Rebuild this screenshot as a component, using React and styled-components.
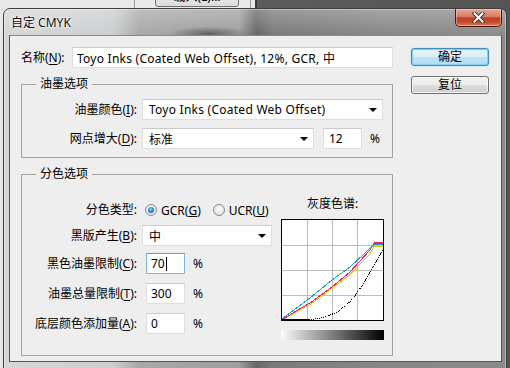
import React from "react";
import styled, { createGlobalStyle } from "styled-components";

const GlobalStyle = createGlobalStyle`
  html, body {
    margin: 0;
    padding: 0;
  }
  body {
    background: #5a5a5a;
    font-family: "Noto Sans", "Noto Sans CJK SC", sans-serif;
    font-size: 12px;
    color: #000;
  }
`;

const Desktop = styled.div`
  position: relative;
  width: 510px;
  height: 368px;
  overflow: hidden;
  box-sizing: border-box;
  padding: 8px 0 0 3px;
  background: linear-gradient(
    to right,
    #e9e9e9 0,
    #e9e9e9 255px,
    #3c3c3c 255px,
    #3c3c3c 257px,
    #5c5c5c 257px,
    #555 100%
  );
`;

// the window behind the dialog, only its lower edge shows
const BackWindow = styled.div`
  position: absolute;
  top: 0;
  left: 0;
  width: 255px;
  height: 8px;
  display: flex;
  align-items: flex-end;
`;

const BackDivider = styled.div`
  flex: none;
  width: 1px;
  height: 8px;
  margin-left: ${(p) => p.$ml}px;
  background: #9a9a9a;
`;

const BackButton = styled.div`
  flex: none;
  width: 84px;
  height: 20px;
  margin-left: 20px;
  margin-bottom: 1px;
  box-sizing: border-box;
  border: 1px solid #707070;
  border-radius: 3px;
  background: linear-gradient(#f2f2f2, #dcdcdc);
  font-size: 12px;
  line-height: 18px;
  text-align: center;
`;

const Dialog = styled.div`
  width: 504px;
  height: 372px;
  box-sizing: border-box;
  border: 1px solid #3e3e3e;
  border-radius: 7px 7px 0 0;
  display: flex;
  flex-direction: column;
  background:
    linear-gradient(rgba(255, 255, 255, 0.25), rgba(255, 255, 255, 0) 26px),
    radial-gradient(ellipse 40px 8px at 205px 25px, rgba(40, 40, 40, 0.55), rgba(40, 40, 40, 0)),
    linear-gradient(
      to right,
      #d4d6d8 0,
      #cbcdcf 110px,
      #a8a8a8 135px,
      #9f9f9f 235px,
      #676767 252px,
      #7a7a7a 268px,
      #878787 380px,
      #8b8b8b 100%
    );
  box-shadow: inset 0 0 0 1px rgba(255, 255, 255, 0.35);
`;

const TitleBar = styled.div`
  flex: none;
  height: 26px;
  display: flex;
  align-items: center;
  justify-content: space-between;
  padding: 0 4px 0 7px;
`;

const Title = styled.span`
  font-size: 12px;
  color: #111;
  text-shadow: 0 0 5px #fff, 0 0 2px #fff;
`;

const CloseButton = styled.div`
  align-self: flex-start;
  width: 47px;
  height: 18px;
  box-sizing: border-box;
  border: 1px solid #4e1a10;
  border-top: none;
  border-radius: 0 0 5px 5px;
  background: linear-gradient(#e8a797 0%, #d77b66 45%, #c1401f 52%, #c5472a 75%, #dc7c5c 100%);
  box-shadow: inset 0 0 0 1px rgba(255, 220, 210, 0.45);
  display: flex;
  align-items: center;
  justify-content: center;
`;

const Client = styled.div`
  flex: none;
  height: 327px;
  box-sizing: border-box;
  margin: 0 4px 0 5px;
  border: 1px solid #555;
  border-top-color: #8a8a8a;
  background: #eeeeee;
  display: flex;
  padding: 11px 12px 0 11px;
`;

const MainColumn = styled.div`
  flex: none;
  width: 372px;
  display: flex;
  flex-direction: column;
`;

const ButtonColumn = styled.div`
  flex: none;
  margin: 1px 0 0 18px;
  display: flex;
  flex-direction: column;
  gap: 10px;
`;

const PushButton = styled.div`
  width: 78px;
  height: 18px;
  box-sizing: border-box;
  border: 1px solid ${(p) => (p.$default ? "#3c8ec4" : "#707070")};
  border-radius: 3px;
  background: ${(p) =>
    p.$default
      ? "linear-gradient(#e7f5fc 0%, #d7eefa 50%, #bfe3f6 52%, #b2dcf3 100%)"
      : "linear-gradient(#f3f3f3 0%, #ebebeb 50%, #dddddd 52%, #cfcfcf 100%)"};
  box-shadow: ${(p) =>
    p.$default
      ? "inset 0 0 0 1px #7fd0f7, 0 0 1px #55b8ea"
      : "inset 0 0 0 1px rgba(255,255,255,0.7)"};
  font-size: 12px;
  line-height: 16px;
  text-align: center;
`;

const NameRow = styled.div`
  height: 21px;
  display: flex;
  align-items: center;
`;

const Label = styled.span`
  flex: none;
  width: ${(p) => p.$w}px;
  text-align: ${(p) => p.$align || "left"};
  white-space: nowrap;
  line-height: 16px;

  u {
    text-decoration-thickness: 1px;
    text-underline-offset: 2px;
  }
`;

const Group = styled.fieldset`
  margin: 8px 0 0;
  padding: ${(p) => p.$pad};
  border: 1px solid #a3a3a3;
  min-width: 0;
`;

const Legend = styled.legend`
  margin-left: 14px;
  padding: 0 4px;
  line-height: 16px;
  font-size: 12px;
`;

const FormRow = styled.div`
  height: ${(p) => p.$h || 21}px;
  margin-top: ${(p) => p.$mt || 0}px;
  display: flex;
  align-items: center;
`;

const FieldArea = styled.div`
  margin-left: 5px;
  display: flex;
  align-items: center;
  height: 100%;
`;

const TextBox = styled.div`
  flex: none;
  box-sizing: border-box;
  width: ${(p) => p.$w}px;
  height: 21px;
  margin-left: ${(p) => p.$ml || 0}px;
  padding-left: ${(p) => p.$pl || 4}px;
  letter-spacing: ${(p) => (p.$wide ? "0.25px" : "0")};
  background: #fff;
  border: 1px solid ${(p) => (p.$focused ? "#7eb4ea" : "#dedede")};
  border-top-color: ${(p) => (p.$focused ? "#569de5" : "#cbcbcb")};
  display: flex;
  align-items: center;
  white-space: nowrap;
  overflow: hidden;
`;

const Caret = styled.span`
  display: inline-block;
  width: 1px;
  height: 14px;
  margin-left: 1px;
  background: #000;
`;

const SelectBox = styled(TextBox)`
  position: relative;
  padding-left: 6px;
  justify-content: space-between;
  padding-right: 5px;
`;

const Arrow = styled.span`
  width: 0;
  height: 0;
  border-left: 4px solid transparent;
  border-right: 4px solid transparent;
  border-top: 4px solid #000;
`;

const Unit = styled.span`
  margin-left: ${(p) => p.$ml || 8}px;
`;

const SplitBody = styled.div`
  display: flex;
`;

const SplitFields = styled.div`
  flex: none;
  padding-top: 18px;
  display: flex;
  flex-direction: column;
`;

const Radio = styled.span`
  flex: none;
  width: 12px;
  height: 12px;
  box-sizing: border-box;
  margin-left: ${(p) => p.$ml}px;
  border-radius: 50%;
  border: 1px solid #8a8d90;
  background: radial-gradient(circle at 50% 40%, #fdfdfd 0%, #e6e6e6 60%, #cfd1d3 100%);
  display: flex;
  align-items: center;
  justify-content: center;

  &::after {
    content: "";
    display: ${(p) => (p.$checked ? "block" : "none")};
    width: 6px;
    height: 6px;
    border-radius: 50%;
    background: radial-gradient(circle at 45% 35%, #8fd2f8 0%, #1b7fc4 55%, #0d4e84 100%);
  }
`;

const RadioText = styled.span`
  margin-left: 4px;
`;

const Ramp = styled.div`
  flex: none;
  width: 103px;
  margin-left: auto;
  padding-top: 14px;
  display: flex;
  flex-direction: column;
  align-items: center;
`;

const RampTitle = styled.div`
  line-height: 16px;
  margin-bottom: 7px;
`;

const GrayBar = styled.div`
  width: 103px;
  height: 10px;
  margin-top: 9px;
  background: linear-gradient(to right, #fbfbfb, #000);
`;

function CloseGlyph() {
  return (
    <svg width="13" height="11" viewBox="0 0 13 11">
      <path d="M2.5 1.5 L10.5 9.5 M10.5 1.5 L2.5 9.5" stroke="#3a3a3a" strokeWidth="4" strokeLinecap="square" />
      <path d="M2.5 1.5 L10.5 9.5 M10.5 1.5 L2.5 9.5" stroke="#fff" strokeWidth="2" strokeLinecap="square" />
    </svg>
  );
}

function GrayCurves() {
  return (
    <svg width="103" height="102" viewBox="0 0 103 102" shapeRendering="crispEdges">
      <rect x="0" y="0" width="103" height="102" fill="#fff" />
      <g stroke="#bdbdbd" strokeWidth="1">
        <path d="M26.5 1 V101 M51.5 1 V101 M76.5 1 V101" />
        <path d="M1 26.5 H102 M1 51.5 H102 M1 76.5 H102" />
      </g>
      <g fill="none" strokeWidth="1">
        <polyline
          stroke="#f5c400"
          points="1,101 15,93 29,85.5 51,69.5 69,55.5 89,35 93,27 102,27"
        />
        <polyline
          stroke="#ee1c6b"
          points="1,101 15,92 29,84 51,68 69,53 89,31 93,24 102,24"
        />
        <path d="M93 23.5 H102" stroke="#ee1c6b" strokeWidth="2" />
        <polyline
          stroke="#1f9fd4"
          points="1,100 15,89.5 29,79 51,61 69,48 91,27.5 93,25.5 102,25.5"
        />
        <path d="M1 100.5 H28" stroke="#000" strokeWidth="1.5" />
        <polyline
          stroke="#000"
          strokeDasharray="1 1"
          points="28,100.5 34,100 40,99 48,96.5 56,93 63,88 70,81.5 76,74 82,65 89,53 95,43 102,31"
        />
      </g>
      <rect x="0.5" y="0.5" width="102" height="101" fill="none" stroke="#000" />
    </svg>
  );
}

export default function App() {
  return (
    <>
      <GlobalStyle />
      <Desktop>
        <BackWindow>
          <BackDivider $ml={134} />
          <BackButton>载入(L)...</BackButton>
          <BackDivider $ml={11} />
        </BackWindow>

        <Dialog>
          <TitleBar>
            <Title>自定 CMYK</Title>
            <CloseButton>
              <CloseGlyph />
            </CloseButton>
          </TitleBar>

          <Client>
            <MainColumn>
              <NameRow>
                <Label $w={51}>
                  名称(<u>N</u>):
                </Label>
                <TextBox $w={321} $wide>
                  Toyo Inks (Coated Web Offset), 12%, GCR, 中
                </TextBox>
              </NameRow>

              <Group $pad="7px 0 8px 0">
                <Legend>油墨选项</Legend>
                <FormRow>
                  <Label $w={115} $align="right">
                    油墨颜色(<u>I</u>):
                  </Label>
                  <FieldArea>
                    <SelectBox $w={241} $wide>
                      <span>Toyo Inks (Coated Web Offset)</span>
                      <Arrow />
                    </SelectBox>
                  </FieldArea>
                </FormRow>
                <FormRow $mt={8}>
                  <Label $w={115} $align="right">
                    网点增大(<u>D</u>):
                  </Label>
                  <FieldArea>
                    <SelectBox $w={172}>
                      <span>标准</span>
                      <Arrow />
                    </SelectBox>
                    <TextBox $w={39} $ml={9} $pl={5}>
                      12
                    </TextBox>
                    <Unit>%</Unit>
                  </FieldArea>
                </FormRow>
              </Group>

              <Group $pad="0 8px 15px 0">
                <Legend>分色选项</Legend>
                <SplitBody>
                  <SplitFields>
                    <FormRow $h={20}>
                      <Label $w={115} $align="right">
                        分色类型:
                      </Label>
                      <FieldArea>
                        <Radio $ml={3} $checked />
                        <RadioText>
                          GCR(<u>G</u>)
                        </RadioText>
                        <Radio $ml={12} />
                        <RadioText>
                          UCR(<u>U</u>)
                        </RadioText>
                      </FieldArea>
                    </FormRow>
                    <FormRow $mt={5}>
                      <Label $w={115} $align="right">
                        黑版产生(<u>B</u>):
                      </Label>
                      <FieldArea>
                        <SelectBox $w={130}>
                          <span>中</span>
                          <Arrow />
                        </SelectBox>
                      </FieldArea>
                    </FormRow>
                    <FormRow $mt={7}>
                      <Label $w={115} $align="right">
                        黑色油墨限制(<u>C</u>):
                      </Label>
                      <FieldArea>
                        <TextBox $w={39} $ml={4} $focused>
                          70
                          <Caret />
                        </TextBox>
                        <Unit>%</Unit>
                      </FieldArea>
                    </FormRow>
                    <FormRow $mt={9}>
                      <Label $w={115} $align="right">
                        油墨总量限制(<u>T</u>):
                      </Label>
                      <FieldArea>
                        <TextBox $w={39} $ml={4}>
                          300
                        </TextBox>
                        <Unit>%</Unit>
                      </FieldArea>
                    </FormRow>
                    <FormRow $mt={9}>
                      <Label $w={115} $align="right">
                        底层颜色添加量(<u>A</u>):
                      </Label>
                      <FieldArea>
                        <TextBox $w={39} $ml={4}>
                          0
                        </TextBox>
                        <Unit>%</Unit>
                      </FieldArea>
                    </FormRow>
                  </SplitFields>

                  <Ramp>
                    <RampTitle>灰度色谱:</RampTitle>
                    <GrayCurves />
                    <GrayBar />
                  </Ramp>
                </SplitBody>
              </Group>
            </MainColumn>

            <ButtonColumn>
              <PushButton $default>确定</PushButton>
              <PushButton>复位</PushButton>
            </ButtonColumn>
          </Client>
        </Dialog>
      </Desktop>
    </>
  );
}
